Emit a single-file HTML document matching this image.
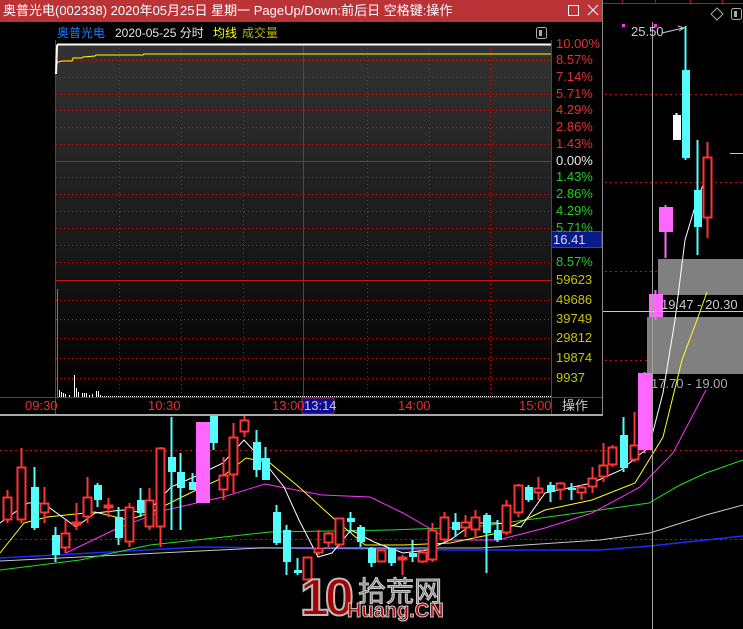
<!DOCTYPE html>
<html><head><meta charset="utf-8"><style>
*{margin:0;padding:0;box-sizing:border-box}
html{width:743px;height:629px;overflow:hidden}
body{width:743px;height:629px;background:#000;position:relative;overflow:hidden;font-family:"Liberation Sans","Noto Sans CJK SC",sans-serif}
.t{position:absolute;font-size:13px;line-height:14px;white-space:nowrap}
.l{right:691px;text-align:right}
.r{left:556px}
.red{color:#e8302c}.grn{color:#1ed21e}.yel{color:#c8c400}.wht{color:#e6e6e6}
</style></head><body>
<svg width="743" height="629" style="position:absolute;left:0;top:0">
<g stroke="#c01010" stroke-width="1" stroke-dasharray="2,3">
<line x1="0" y1="94.5" x2="743" y2="94.5"/><line x1="0" y1="182.5" x2="743" y2="182.5"/><line x1="0" y1="271.5" x2="743" y2="271.5"/><line x1="0" y1="360.5" x2="743" y2="360.5"/><line x1="0" y1="450.5" x2="743" y2="450.5"/><line x1="0" y1="539.5" x2="743" y2="539.5"/>
</g>
<line x1="603" y1="3.5" x2="743" y2="3.5" stroke="#b01818"/>
<g stroke="#b01818"><line x1="622.5" y1="0" x2="622.5" y2="4"/><line x1="655.5" y1="0" x2="655.5" y2="4"/><line x1="690.5" y1="0" x2="690.5" y2="4"/><line x1="722.5" y1="0" x2="722.5" y2="4"/></g>
<rect x="658" y="259" width="85" height="36" fill="#808080"/>
<rect x="647" y="317" width="96" height="57" fill="#808080"/>
<g fill="none" stroke-width="1">
<polyline stroke="#1a2cff" stroke-width="1.5" points="0,558 200,547 450,550 600,550 650,546 706,540 743,536"/>
<polyline stroke="#c8c8c8" points="0,561 260,548 480,548 600,540 650,533 706,515 743,505"/>
<polyline stroke="#20e020" points="0,570 80,560 150,545 270,532 389,530 474,527 600,510 649,503 680,485 706,473 743,460"/>
<polyline stroke="#ff30ff" points="66,553 118,528 166,510 223,497 265,484 322,495 370,497 403,513 450,540 498,540 545,528 592,513 640,487 673,453 706,390"/>
<polyline stroke="#ffff20" points="0,553 24,523 47,517 95,512 128,520 152,512 190,493 218,480 246,458 270,463 299,487 332,517 365,545 403,545 450,543 498,533 545,510 592,500 635,483 663,437 682,360 697,320 707,292"/>
<polyline stroke="#ffffff" points="0,523 28,503 43,503 76,527 95,513 123,510 147,513 171,487 194,477 223,463 244,440 265,463 284,487 299,520 318,557 332,553 351,530 374,542 403,553 427,550 450,540 474,523 498,523 521,527 545,493 592,483 621,470 649,447 663,393 675,320 685,240 697,200 707,175"/>
</g>
<g id="candles"></g>
<line x1="652.5" y1="22" x2="652.5" y2="629" stroke="#a0a0a0"/>
<line x1="603" y1="311.5" x2="743" y2="311.5" stroke="#c8c8c8"/>
<rect x="622" y="24" width="3" height="3" fill="#ff30ff"/><rect x="654" y="24" width="3" height="3" fill="#ff30ff"/>
<path d="M662 33 L683 28 M678 26 L684 28 L679 31" stroke="#ccc" fill="none"/>
<path d="M717 8 L723 14 L717 20 L711 14 Z" stroke="#aaa" fill="none"/>
<rect x="731.5" y="8.5" width="10" height="11" rx="2" stroke="#aaa" fill="none"/><rect x="734" y="11" width="3" height="6" fill="#aaa"/>
</svg>
<div class="t" style="left:631px;top:25px;color:#ccc">25.50</div>
<div class="t" style="left:661px;top:298px;color:#ccc">19.47 - 20.30</div>
<div class="t" style="left:651px;top:377px;color:#aaa">17.70 - 19.00</div>
<div style="position:absolute;left:730px;top:153px;width:13px;height:1px;background:#dd0"></div>

<div style="position:absolute;left:300px;top:570px;font:bold 52px/56px 'Liberation Sans',sans-serif;color:#a80000;-webkit-text-stroke:2px #bbb;letter-spacing:-4px">10</div>
<div style="position:absolute;left:358px;top:575px;font:28px/30px 'Noto Sans CJK SC',sans-serif;color:#808080;-webkit-text-stroke:1px #ccc">拾荒网</div>
<div style="position:absolute;left:347px;top:600px;font:bold 20px/22px 'Liberation Sans',sans-serif;color:#b00000;-webkit-text-stroke:1px #ccc">Huang.CN</div>

<div style="position:absolute;left:0;top:0;width:603px;height:416px;background:#000;border-right:1px solid #888;border-bottom:2px solid #aaa;overflow:hidden">
<div style="position:absolute;left:0;top:0;width:602px;height:22px;background:#b93337"></div>
<div class="t" style="left:3px;top:4px;color:#fff">奥普光电(002338) 2020年05月25日 星期一 PageUp/Down:前后日 空格键:操作</div>
<svg width="602" height="414" style="position:absolute;left:0;top:0">
<rect x="568.5" y="5.5" width="10" height="10" stroke="#fff" fill="none"/>
<path d="M588 5 L598 15 M598 5 L588 15" stroke="#fff"/>
<rect x="536.5" y="27.5" width="10" height="11" rx="2" stroke="#aaa" fill="none"/><rect x="539" y="30" width="3" height="6" fill="#aaa"/>
<defs><linearGradient id="g" x1="0" y1="0" x2="0" y2="1">
<stop offset="0" stop-color="#333"/><stop offset="0.55" stop-color="#1a1a1a"/><stop offset="0.85" stop-color="#080808"/><stop offset="1" stop-color="#000"/></linearGradient></defs>
<rect x="56" y="44" width="495" height="353" fill="url(#g)"/>
<g stroke="#c01010" stroke-dasharray="1,3">
<line x1="56" y1="60.5" x2="551" y2="60.5"/><line x1="56" y1="77.5" x2="551" y2="77.5"/><line x1="56" y1="94.5" x2="551" y2="94.5"/><line x1="56" y1="110.5" x2="551" y2="110.5"/><line x1="56" y1="127.5" x2="551" y2="127.5"/><line x1="56" y1="144.5" x2="551" y2="144.5"/>
<line x1="56" y1="177.5" x2="551" y2="177.5"/><line x1="56" y1="194.5" x2="551" y2="194.5"/><line x1="56" y1="211.5" x2="551" y2="211.5"/><line x1="56" y1="228.5" x2="551" y2="228.5"/><line x1="56" y1="245.5" x2="551" y2="245.5"/><line x1="56" y1="262.5" x2="551" y2="262.5"/>
<line x1="56" y1="300.5" x2="551" y2="300.5"/><line x1="56" y1="319.5" x2="551" y2="319.5"/><line x1="56" y1="338.5" x2="551" y2="338.5"/><line x1="56" y1="358.5" x2="551" y2="358.5"/><line x1="56" y1="378.5" x2="551" y2="378.5"/>
<line x1="119.5" y1="44" x2="119.5" y2="397"/><line x1="181.5" y1="44" x2="181.5" y2="397"/><line x1="243.5" y1="44" x2="243.5" y2="397"/><line x1="367.5" y1="44" x2="367.5" y2="397"/><line x1="429.5" y1="44" x2="429.5" y2="397"/><line x1="490.5" y1="44" x2="490.5" y2="397"/>
</g>
<g stroke="#c81414">
<line x1="55.5" y1="40" x2="55.5" y2="414"/><line x1="551.5" y1="40" x2="551.5" y2="414"/>
<line x1="56" y1="161.5" x2="551" y2="161.5"/><line x1="56" y1="280.5" x2="551" y2="280.5"/><line x1="0" y1="397.5" x2="602" y2="397.5"/>
<line x1="303.5" y1="44" x2="303.5" y2="397"/>
</g>
<polyline fill="none" stroke="#fff" stroke-width="2" points="56,74 57,46 58,44.5 551,44.5"/>
<polyline fill="none" stroke="#ffff00" points="57,64 58,62 62,61 72,61 73,58 82,58 83,57 95,56 96,55 143,55 144,54 551,54"/>
<line x1="57.5" y1="289" x2="57.5" y2="397" stroke="#ff4040"/>
<g stroke="#fff">
<line x1="59.5" y1="390" x2="59.5" y2="397"/><line x1="61.5" y1="392" x2="61.5" y2="397"/><line x1="63.5" y1="393" x2="63.5" y2="397"/><line x1="65.5" y1="394" x2="65.5" y2="397"/><line x1="69.5" y1="395" x2="69.5" y2="397"/><line x1="74.5" y1="375" x2="74.5" y2="397"/><line x1="76.5" y1="388" x2="76.5" y2="397"/><line x1="78.5" y1="392" x2="78.5" y2="397"/><line x1="82.5" y1="393" x2="82.5" y2="397"/><line x1="84.5" y1="393" x2="84.5" y2="397"/><line x1="86.5" y1="393" x2="86.5" y2="397"/><line x1="89.5" y1="395" x2="89.5" y2="397"/><line x1="92.5" y1="394" x2="92.5" y2="397"/><line x1="96.5" y1="391" x2="96.5" y2="397"/><line x1="98.5" y1="391" x2="98.5" y2="397"/><line x1="100.5" y1="395" x2="100.5" y2="397"/>
</g>
<line x1="102" y1="396.5" x2="551" y2="396.5" stroke="#fff" stroke-dasharray="1,1"/>
<rect x="302" y="398" width="32" height="16" fill="#0a0a90" stroke="#c81414"/>
<rect x="551.5" y="231.5" width="50" height="16" fill="#0a1a8a" stroke="#c81414"/>
</svg>
<div class="t" style="left:57px;top:26px;font-size:12px;color:#1e7cff">奥普光电</div>
<div class="t" style="left:115px;top:26px;font-size:12px;color:#e6e6e6">2020-05-25 分时</div>
<div class="t" style="left:213px;top:26px;font-size:12px;color:#ffff00">均线</div>
<div class="t" style="left:242px;top:26px;font-size:12px;color:#b8b800">成交量</div>

<div class="t l red" style="top:37px">19.47</div><div class="t l red" style="top:53px">19.22</div><div class="t l red" style="top:70px">18.96</div><div class="t l red" style="top:87px">18.71</div><div class="t l red" style="top:103px">18.46</div><div class="t l red" style="top:120px">18.21</div><div class="t l red" style="top:137px">17.95</div>
<div class="t l wht" style="top:154px">17.70</div>
<div class="t l grn" style="top:170px">17.45</div><div class="t l grn" style="top:187px">17.19</div><div class="t l grn" style="top:204px">16.94</div><div class="t l grn" style="top:221px">16.69</div><div class="t l grn" style="top:238px">16.44</div><div class="t l grn" style="top:255px">16.18</div>
<div class="t l yel" style="top:273px">59623</div><div class="t l yel" style="top:293px">49686</div><div class="t l yel" style="top:312px">39749</div><div class="t l yel" style="top:331px">29812</div><div class="t l yel" style="top:351px">19874</div><div class="t l yel" style="top:371px">9937</div>

<div class="t r red" style="top:37px">10.00%</div><div class="t r red" style="top:53px">8.57%</div><div class="t r red" style="top:70px">7.14%</div><div class="t r red" style="top:87px">5.71%</div><div class="t r red" style="top:103px">4.29%</div><div class="t r red" style="top:120px">2.86%</div><div class="t r red" style="top:137px">1.43%</div>
<div class="t r wht" style="top:154px">0.00%</div>
<div class="t r grn" style="top:170px">1.43%</div><div class="t r grn" style="top:187px">2.86%</div><div class="t r grn" style="top:204px">4.29%</div><div class="t r grn" style="top:221px">5.71%</div>
<div class="t" style="left:553px;top:233px;color:#ddd">16.41</div>
<div class="t r grn" style="top:255px">8.57%</div>
<div class="t r yel" style="top:273px">59623</div><div class="t r yel" style="top:293px">49686</div><div class="t r yel" style="top:312px">39749</div><div class="t r yel" style="top:331px">29812</div><div class="t r yel" style="top:351px">19874</div><div class="t r yel" style="top:371px">9937</div>

<div class="t red" style="left:25px;top:399px">09:30</div>
<div class="t red" style="left:148px;top:399px">10:30</div>
<div class="t red" style="left:272px;top:399px">13:00</div>
<div class="t" style="left:304px;top:399px;color:#ccc">13:14</div>
<div class="t red" style="left:398px;top:399px">14:00</div>
<div class="t red" style="left:519px;top:399px">15:00</div>
<div class="t" style="left:562px;top:399px;color:#ccc">操作</div>
</div>
<script>
var C=[[7,490,497,520,523,'r'],[21,448,467,520,523,'r'],[34,467,487,528,530,'c'],[44,487,503,513,523,'r'],[55,527,535,555,562,'c'],[65,520,533,548,553,'r'],[76,503,522,525,530,'r'],[87,477,497,517,523,'r'],[97,483,485,500,507,'c'],[108,498,505,508,517,'r'],[118,507,517,538,545,'c'],[129,503,507,542,547,'r'],[140,488,500,513,517,'c'],[149,488,500,527,530,'r'],[160,447,448,527,547,'r'],[171,417,457,472,530,'c'],[180,453,472,488,530,'c'],[192,473,482,490,490,'c'],[202,422,422,503,503,'m'],[213,414,414,443,450,'c'],[223,457,475,490,500,'r'],[233,423,437,475,493,'r'],[244,415,420,432,437,'r'],[256,430,442,470,477,'c'],[265,447,458,480,480,'c'],[276,505,512,543,545,'c'],[286,525,530,562,575,'c'],[297,558,570,573,575,'c'],[307,557,557,580,580,'r'],[318,530,548,553,555,'r'],[328,532,533,543,547,'r'],[339,518,518,545,547,'r'],[350,512,518,522,533,'c'],[360,525,527,542,547,'c'],[371,547,548,563,567,'c'],[381,548,550,562,562,'r'],[391,548,548,563,566,'c'],[402,555,557,560,575,'r'],[412,540,553,557,562,'c'],[422,550,552,562,563,'r'],[432,523,530,560,562,'r'],[444,512,517,540,542,'r'],[455,513,522,530,537,'c'],[465,515,522,528,537,'r'],[475,510,517,530,538,'r'],[486,513,515,533,573,'c'],[497,520,530,540,542,'c'],[506,500,505,533,535,'r'],[518,484,485,513,517,'r'],[528,485,487,500,502,'c'],[538,477,488,493,500,'r'],[550,482,485,492,502,'c'],[560,482,483,490,500,'r'],[571,483,488,490,500,'c'],[581,485,487,493,500,'r'],[592,467,478,487,493,'r'],[603,443,465,477,482,'r'],[612,445,447,465,467,'r'],[623,417,435,468,472,'c'],[634,412,445,460,462,'r'],[644,372,373,450,453,'m'],[655,290,294,317,320,'m'],[665,205,207,232,258,'m'],[676,113,115,140,140,'w'],[685,26,70,158,160,'c'],[697,140,190,227,255,'c'],[707,142,157,218,238,'r']];
var col={r:'#ff3434',c:'#54fcfc',m:'#ff66ff',w:'#ffffff'};var s='';
C.forEach(function(k){var x=k[0],c=col[k[5]],w=k[5]=='m'?14:8;
s+='<line x1="'+(x+.5)+'" y1="'+k[1]+'" x2="'+(x+.5)+'" y2="'+k[4]+'" stroke="'+c+'" stroke-width="2"/>';
var h=Math.max(k[3]-k[2],2);
if(k[5]=='r')s+='<rect x="'+(x-3.5)+'" y="'+(k[2]+.5)+'" width="8" height="'+(h-1)+'" fill="#000" stroke="'+c+'" stroke-width="2"/>';
else s+='<rect x="'+(x+1-w/2)+'" y="'+k[2]+'" width="'+w+'" height="'+h+'" fill="'+c+'"/>';});
document.getElementById('candles').innerHTML=s;
</script>
</body></html>
